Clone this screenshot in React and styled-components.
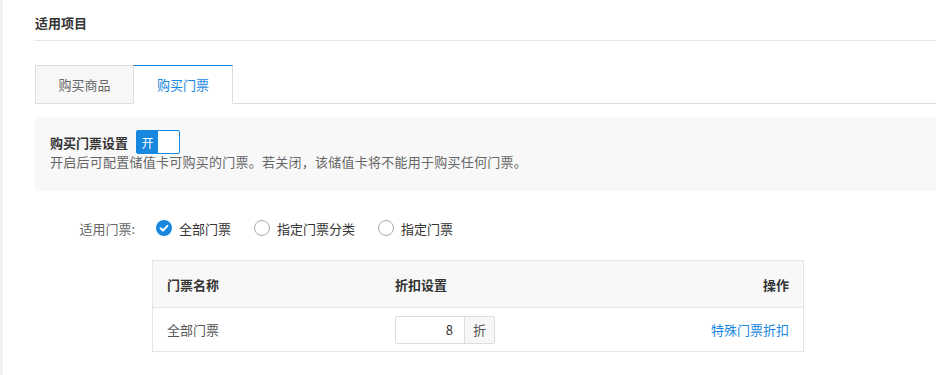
import styled, { createGlobalStyle } from "styled-components"

const GlobalStyle = createGlobalStyle`
  body {
    margin: 0;
    background: #fff;
    font-family: "Noto Sans CJK SC", "Noto Sans", sans-serif;
    font-size: 13px;
    color: #333;
  }
`

const BLUE = "#1787e0"

const RadioOption = ({ checked, label }) => (
  <Option>
    <RadioDot checked={checked}>
      {checked && (
        <svg width="16" height="16" viewBox="0 0 16 16">
          <path d="M4.6 8.3 L7 10.5 L11.4 5.9" fill="none" stroke="#fff" strokeWidth="2" strokeLinecap="round" strokeLinejoin="round" />
        </svg>
      )}
    </RadioDot>
    <span>{label}</span>
  </Option>
)

const App = () => {
  return (
    <Page>
      <GlobalStyle />
      <Strip />
      <Main>
        <SectionTitle>适用项目</SectionTitle>
        <TabBar>
          <Tab>购买商品</Tab>
          <Tab active>购买门票</Tab>
        </TabBar>

        <Panel>
          <PanelRow>
            <PanelTitle>购买门票设置</PanelTitle>
            <Switch>
              <SwitchOn>开</SwitchOn>
            </Switch>
          </PanelRow>
          <PanelDesc>开启后可配置储值卡可购买的门票。若关闭，该储值卡将不能用于购买任何门票。</PanelDesc>
        </Panel>

        <FormRow>
          <FormLabel>适用门票:</FormLabel>
          <Options>
            <RadioOption checked label="全部门票" />
            <RadioOption label="指定门票分类" />
            <RadioOption label="指定门票" />
          </Options>
        </FormRow>

        <Table>
          <HeadRow>
            <Cell>门票名称</Cell>
            <Cell>折扣设置</Cell>
            <Cell right>操作</Cell>
          </HeadRow>
          <BodyRow>
            <Cell>全部门票</Cell>
            <Cell>
              <InputGroup>
                <NumInput>8</NumInput>
                <Addon>折</Addon>
              </InputGroup>
            </Cell>
            <Cell right>
              <Link href="#">特殊门票折扣</Link>
            </Cell>
          </BodyRow>
        </Table>
      </Main>
    </Page>
  )
}

export default App

const Page = styled.div`
    display: flex;
    width: 936px;
    height: 375px;
    overflow: hidden;
`

const Strip = styled.div`
    width: 3px;
    flex-shrink: 0;
    background: #f2f2f2;
`

const Main = styled.div`
    flex: 1;
    padding-left: 32px;
`

const SectionTitle = styled.div`
    height: 41px;
    box-sizing: border-box;
    font-weight: bold;
    font-size: 13px;
    color: #333;
    border-bottom: 1px solid #e5e5e5;
    line-height: 46px;
    margin-bottom: 24px;
`

const TabBar = styled.div`
    display: flex;
    border-bottom: 1px solid #ddd;
    height: 38px;
`

const Tab = styled.div`
    box-sizing: border-box;
    width: ${p => (p.active ? "100px" : "99px")};
    height: 39px;
    margin-left: ${p => (p.active ? "-1px" : "0")};
    display: flex;
    align-items: center;
    justify-content: center;
    border: 1px solid #ddd;
    border-top-color: ${p => (p.active ? BLUE : "#ddd")};
    border-bottom-color: ${p => (p.active ? "#fff" : "#ddd")};
    background: ${p => (p.active ? "#fff" : "#f7f7f7")};
    color: ${p => (p.active ? BLUE : "#666")};
    font-size: 13px;
`

const Panel = styled.div`
    margin-top: 13px;
    background: #f8f8f8;
    padding: 13px 15px 21px;
`

const PanelRow = styled.div`
    display: flex;
    align-items: center;
    height: 24px;
    gap: 8px;
`

const PanelTitle = styled.span`
    font-weight: bold;
    color: #333;
`

const Switch = styled.div`
    box-sizing: border-box;
    width: 44px;
    height: 24px;
    border: 1px solid ${BLUE};
    border-radius: 2px;
    background: #fff;
    display: flex;
`

const SwitchOn = styled.div`
    width: 21px;
    background: ${BLUE};
    color: #fff;
    font-size: 12px;
    display: flex;
    align-items: center;
    justify-content: center;
`

const PanelDesc = styled.div`
    line-height: 16px;
    color: #666;
    letter-spacing: 0.25px;
`

const FormRow = styled.div`
    display: flex;
    align-items: center;
    height: 32px;
    margin-top: 21px;
`

const FormLabel = styled.div`
    width: 117px;
    box-sizing: border-box;
    padding-right: 17px;
    text-align: right;
    color: #666;
`

const Options = styled.div`
    display: flex;
    align-items: center;
    gap: 23px;
    padding-left: 4px;
`

const Option = styled.label`
    display: flex;
    align-items: center;
    gap: 7px;
    color: #333;
`

const RadioDot = styled.span`
    box-sizing: border-box;
    width: 16px;
    height: 16px;
    border-radius: 50%;
    display: flex;
    align-items: center;
    justify-content: center;
    background: ${p => (p.checked ? BLUE : "#fff")};
    border: ${p => (p.checked ? "none" : "1px solid #aaa")};
`

const Table = styled.div`
    margin: 16px 0 0 117px;
    width: 652px;
    box-sizing: border-box;
    border: 1px solid #e5e5e5;
`

const HeadRow = styled.div`
    display: grid;
    grid-template-columns: 228px 1fr 1fr;
    align-items: center;
    height: 46px;
    background: #f8f8f8;
    border-bottom: 1px solid #e5e5e5;
    font-weight: bold;
    color: #333;
`

const BodyRow = styled.div`
    display: grid;
    grid-template-columns: 228px 1fr 1fr;
    align-items: center;
    height: 43px;
    color: #555;
`

const Cell = styled.div`
    padding: 0 14px;
    text-align: ${p => (p.right ? "right" : "left")};
`

const InputGroup = styled.div`
    display: flex;
    box-sizing: border-box;
    width: 100px;
    height: 28px;
    border: 1px solid #ddd;
    border-radius: 2px;
`

const NumInput = styled.div`
    width: 68px;
    box-sizing: border-box;
    padding-right: 11px;
    text-align: right;
    line-height: 26px;
    color: #333;
    background: #fff;
`

const Addon = styled.div`
    flex: 1;
    border-left: 1px solid #ddd;
    background: #f7f7f7;
    display: flex;
    align-items: center;
    justify-content: center;
    color: #555;
`

const Link = styled.a`
    color: ${BLUE};
    text-decoration: none;
`
